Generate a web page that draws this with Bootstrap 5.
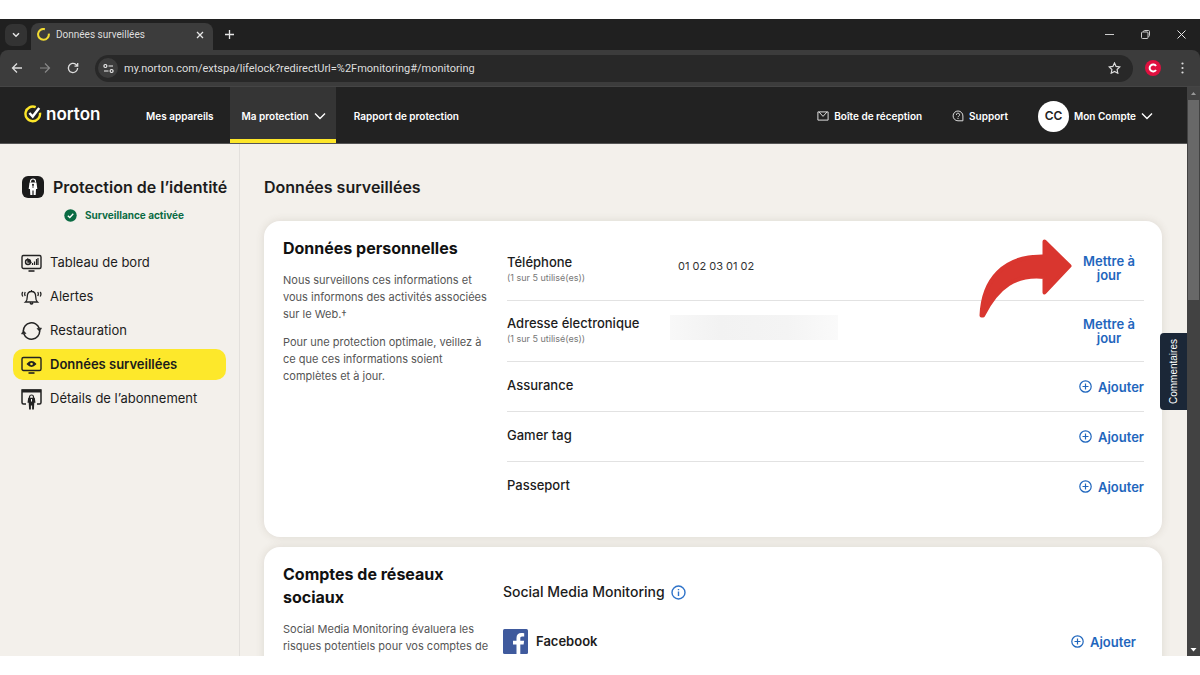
<!DOCTYPE html>
<html lang="fr">
<head>
<meta charset="utf-8">
<meta name="viewport" content="width=device-width, initial-scale=1">
<title>Données surveillées</title>
<link href="https://cdn.jsdelivr.net/npm/bootstrap@5.3.0/dist/css/bootstrap.min.css" rel="stylesheet">
<style>
  body { font-family: Inter, "Liberation Sans", sans-serif; font-size: 13px; color: #1c1c1c; background: #fff; height: 100vh; padding: 19px 0; overflow: hidden; }
  svg { display: block; flex: none; }
  button { font: inherit; color: inherit; background: none; border: 0; padding: 0; }
  a { color: inherit; text-decoration: none; }
  .browser { background: #202020; }
  .chrome-text { font-family: Roboto, "Noto Sans", sans-serif; font-size: 11px; color: #dedede; }
  .titlebar { height: 31px; padding: 0 14px 0 5px; }
  .tab-menu { width: 22px; height: 22px; border-radius: 7px; background: #333; }
  .tab-open { width: 182px; height: 27px; border-radius: 8px 8px 0 0; background: #3c3c3c; padding: 0 9px 4px 6px; gap: 6px; }
  .tab-title { font-size: 10px; }
  .window-buttons { gap: 27px; }
  .toolbar { height: 37px; background: #3c3c3c; border-radius: 8px 8px 0 0; border-bottom: 1px solid #454545; padding: 0 12px 0 11px; }
  .address { height: 27px; border-radius: 14px; background: #282828; padding: 0 12px 0 3px; gap: 6px; }
  .address input { background: none; border: 0; padding: 2px 0 0; outline: 0; }
  .site-info { width: 20px; height: 20px; border-radius: 50%; background: #3c3c3c; }
  .profile { width: 16px; height: 16px; border-radius: 50%; background: #e0103f; margin: 0 16px 0 12px; }
  .site-head { height: 57px; background: #222; border-bottom: 1px solid #555; color: #fff; font-size: 10px; font-weight: 600; padding-left: 24px; padding-right: 34px; }
  .brand { gap: 4px; padding-bottom: 3px; width: 110px; }
  .brand-name { font-size: 17px; line-height: 18px; }
  .head-link { height: 56px; padding: 2px 12px 0; }
  .head-link.active { background: #353535; border-bottom: 4px solid #fde629; padding: 6px 10px 0 12px; margin: 0 6px 0 4px; }
  .head-tools { gap: 30px; padding-top: 2px; }
  .head-tools a, .head-tools button, .head-link { gap: 5px; }
  .avatar { width: 31px; height: 31px; border-radius: 50%; background: #fff; color: #222; font-size: 12px; }
  .site { background: #f3f0eb; }
  .sidebar { width: 240px; border-right: 1px solid #e3e0dc; padding: 31px 13px 0; }
  .side-title { font-size: 16px; font-weight: 600; line-height: 24px; }
  .status { color: #0a6b43; font-size: 10px; font-weight: 700; line-height: 14px; margin: 9px 0 25px 51px; }
  .side-nav { gap: 3px; }
  .side-link { height: 31px; border-radius: 10px; padding: 0 8px; }
  .side-link.active { background: #fde82b; font-weight: 600; }
  .content { padding: 33px 25px 0 24px; }
  h1 { font-size: 16px; font-weight: 600; line-height: 20px; margin-bottom: 24px; }
  h2 { font-size: 16px; font-weight: 700; line-height: 23px; }
  .panel { background: #fff; border-radius: 16px; box-shadow: 0 0 8px rgba(90, 80, 60, .14); padding: 16px 18px 25px 19px; margin-bottom: 10px; }
  .panel-text { width: 208px; font-size: 11px; line-height: 17px; color: #555; }
  .panel-text h2 { color: #111; margin-bottom: 12px; }
  .panel-text p { margin-bottom: 11px; }
  .data-list { padding-top: 3px; }
  .data-row { border-bottom: 1px solid #e2e2e2; }
  .data-row:last-child { border-color: transparent; }
  .data-name { width: 163px; font-weight: 500; line-height: 16px; }
  .data-name small { display: block; font-size: 9px; font-weight: 400; color: #777; }
  .phone { font-size: 11px; color: #333; }
  .row-tall { height: 61px; }
  .row-short { height: 50px; }
  .redacted { width: 168px; height: 25px; background: linear-gradient(90deg, #f8f8f8, #f2f2f2 30%, #f4f4f4 70%, #fafafa); }
  .action { color: #1f66bd; font-weight: 600; line-height: 14px; gap: 6px; }
  .action-wrap { width: 70px; padding: 0 6px; }
  .pointer { right: 100%; top: -16px; margin-right: 2px; }
  .social-title { font-size: 14px; font-weight: 500; line-height: 20px; padding-top: 3px; margin-bottom: 27px; gap: 6px; }
  .feedback { right: 0; top: 246px; width: 27px; height: 77px; background: #1b2737; color: #fff; border-radius: 4px 0 0 4px; }
  .feedback span { writing-mode: vertical-rl; transform: rotate(180deg); font-family: "Liberation Sans", sans-serif; font-size: 10px; }
  .scroll-track { width: 13px; background: #424242; }
  .scroll-thumb { height: 200px; background: #686868; margin: 0 1px; }
</style>
</head>
<body>
<div class="browser h-100 d-flex flex-column">
  <div class="titlebar chrome-text d-flex align-items-end flex-shrink-0">
    <button class="tab-menu d-flex align-items-center justify-content-center align-self-center" aria-label="Rechercher des onglets"><svg width="8" height="6" viewBox="0 0 8 6" fill="none" stroke="#e6e6e6" stroke-width="1.5"><path d="M1 1.2l3 3 3-3"/></svg></button>
    <div class="tab-open d-flex align-items-center ms-1">
      <svg width="13" height="13" viewBox="0 0 14 14" fill="none" stroke="#f2dc33" stroke-width="2.200"><path d="M8.500 1.300A5.800 5.800 0 1 0 12.700 6"/></svg>
      <span class="tab-title me-auto">Données surveillées</span>
      <button aria-label="Fermer l’onglet"><svg width="8" height="8" viewBox="0 0 8 8" stroke="#e6e6e6" stroke-width="1.3"><path d="M1 1l6 6M7 1L1 7"/></svg></button>
    </div>
    <button class="ms-2 ps-1 align-self-center" aria-label="Nouvel onglet"><svg width="9" height="9" viewBox="0 0 9 9" stroke="#e6e6e6" stroke-width="1.3"><path d="M4.500 0v9M0 4.500h9"/></svg></button>
    <div class="window-buttons ms-auto align-self-center d-flex align-items-center">
      <button aria-label="Réduire"><svg width="9" height="9" viewBox="0 0 9 9" stroke="#ccc"><path d="M0 4.500h9"/></svg></button>
      <button aria-label="Agrandir"><svg width="9" height="9" viewBox="0 0 9 9" fill="none" stroke="#ccc"><rect x=".5" y="2" width="6.500" height="6.500" rx="1"/><path d="M2.500 1.800V1.500a1 1 0 0 1 1-1h4a1 1 0 0 1 1 1v4a1 1 0 0 1-1 1"/></svg></button>
      <button aria-label="Fermer"><svg width="9" height="9" viewBox="0 0 9 9" stroke="#e6e6e6"><path d="M.5.5l8 8M8.500.5l-8 8"/></svg></button>
    </div>
  </div>

  <div class="toolbar chrome-text d-flex align-items-center flex-shrink-0">
    <button aria-label="Précédent"><svg width="12" height="12" viewBox="0 0 12 12" fill="none" stroke="#ddd" stroke-width="1.3"><path d="M11 6H2M6 1.500L1.500 6 6 10.500"/></svg></button>
    <button class="ms-3" aria-label="Suivant"><svg width="12" height="12" viewBox="0 0 12 12" fill="none" stroke="#888" stroke-width="1.2"><path d="M1 6h9M6 1.500L10.500 6 6 10.500"/></svg></button>
    <button class="ms-3" aria-label="Actualiser"><svg width="12" height="12" viewBox="0 0 12 12" fill="none" stroke="#ddd" stroke-width="1.300"><path d="M10.600 6A4.600 4.600 0 1 1 9 2.500L10.500 4M10.700 1v3.200H7.500"/></svg></button>
    <div class="address flex-grow-1 d-flex align-items-center ms-3">
      <span class="site-info d-flex align-items-center justify-content-center"><svg width="11" height="11" viewBox="0 0 11 11" fill="none" stroke="#eee" stroke-width="1.200"><circle cx="2.400" cy="3" r="1.500"/><path d="M5.500 3H10M1 8h4.500"/><circle cx="8.600" cy="8" r="1.500"/></svg></span>
      <input class="chrome-text flex-grow-1" type="text" aria-label="Adresse" value="my.norton.com/extspa/lifelock?redirectUrl=%2Fmonitoring#/monitoring">
      <button aria-label="Ajouter aux favoris"><svg width="13" height="12" viewBox="0 0 13 12" fill="none" stroke="#ddd" stroke-width="1.200"><path d="M6.500 1l1.600 3.400 3.700.5-2.700 2.600.7 3.700-3.300-1.800-3.300 1.800.7-3.700L1.200 4.900l3.700-.5z"/></svg></button>
    </div>
    <button class="profile d-flex align-items-center justify-content-center" aria-label="Profil"><svg width="10" height="10" viewBox="0 0 10 10" fill="none" stroke="#fff" stroke-width="2"><path d="M8 3A3.500 3.500 0 1 0 8 7"/></svg></button>
    <button class="px-1" aria-label="Menu"><svg width="3" height="12" viewBox="0 0 3 12" fill="#ddd"><circle cx="1.500" cy="1.500" r="1.100"/><circle cx="1.500" cy="6" r="1.100"/><circle cx="1.500" cy="10.500" r="1.100"/></svg></button>
  </div>

  <div class="d-flex flex-grow-1 overflow-hidden">
    <div class="site flex-grow-1 d-flex flex-column position-relative overflow-hidden">
      <header class="site-head d-flex align-items-center flex-shrink-0">
        <a href="#" class="brand d-flex align-items-center"><svg width="18" height="18" viewBox="0 0 18 18" fill="none"><path d="M11.700 2.200A7.300 7.300 0 1 0 16 7.800" stroke="#fde629" stroke-width="2.400"/><path d="M5.400 8l3.300 3.600L15.200 3" stroke="#fff" stroke-width="2.500"/></svg><span class="brand-name">norton</span></a>
        <nav class="d-flex">
          <a href="#" class="head-link d-flex align-items-center">Mes appareils</a>
          <a href="#" class="head-link active d-flex align-items-center">Ma protection<svg width="12" height="8" viewBox="0 0 12 8" fill="none" stroke="#fff" stroke-width="1.400"><path d="M1 1.500l5 5 5-5"/></svg></a>
          <a href="#" class="head-link d-flex align-items-center">Rapport de protection</a>
        </nav>
        <div class="head-tools d-flex align-items-center ms-auto">
          <a href="#" class="d-flex align-items-center"><svg width="12" height="10" viewBox="0 0 12 10" fill="none" stroke="#ddd"><path d="M.9.9h10.200v8.200H.9z"/><path d="M2 1l4 4.400L10 1"/></svg>Boîte de réception</a>
          <a href="#" class="d-flex align-items-center"><svg width="12" height="12" viewBox="0 0 12 12" fill="none" stroke="#ddd"><path d="M6 10.800A4.900 4.900 0 1 1 10.900 6v4.800z"/><path d="M4.400 4.900a1.600 1.600 0 1 1 2.300 1.300Q6 6.500 6 7.200M6 8v1"/></svg>Support</a>
          <button class="d-flex align-items-center"><span class="avatar d-flex align-items-center justify-content-center">CC</span>Mon Compte<svg width="12" height="8" viewBox="0 0 12 8" fill="none" stroke="#fff" stroke-width="1.400"><path d="M1 1.500l5 5 5-5"/></svg></button>
        </div>
      </header>

      <div class="d-flex flex-grow-1 overflow-hidden">
        <aside class="sidebar flex-shrink-0">
          <div class="side-title d-flex align-items-center ps-2 text-nowrap"><svg class="me-2" width="24" height="24" viewBox="0 0 24 24"><rect x="1" y="1" width="22" height="22" rx="6" fill="#1b1b1b"/><path d="M9.500 7.500V6.500a2.500 2.500 0 0 1 5 0v1" fill="none" stroke="#fff" stroke-width="1.200"/><path d="M8.500 7.500h7l.8 6.500H15l-.3 6h-2.100v-4.500h-1.200V20H9.300L9 14H7.700z" fill="#fff"/><circle cx="12" cy="9.800" r="1" fill="#1b1b1b"/><path d="M11.600 10h.8v3h-.8z" fill="#1b1b1b"/></svg>Protection de l’identité</div>
          <div class="status d-flex align-items-center"><svg class="me-2" width="13" height="13" viewBox="0 0 13 13" fill="none"><circle cx="6.500" cy="6.500" r="6.200" fill="#0a6b43"/><path d="M3.800 6.700l2 1.800 3.500-3.700" stroke="#fff" stroke-width="1.300"/></svg>Surveillance activée</div>
          <nav class="side-nav d-grid">
            <a href="#" class="side-link d-flex align-items-center"><svg class="me-2" width="21" height="20" viewBox="0 0 21 20" fill="none" stroke="#222" stroke-width="1.400"><rect x="1" y="2.500" width="19" height="13" rx="1.500"/><path d="M7.500 18h6" stroke-width="1.600"/><circle cx="7" cy="9" r="2.500"/><path d="M7 9V6.500L9.500 9z" fill="#222"/><path d="M11.500 12v-2M13.500 12V8.500M15.500 12V6M17 12V5" stroke-width="1.200"/></svg>Tableau de bord</a>
            <a href="#" class="side-link d-flex align-items-center"><svg class="me-2" width="21" height="18" viewBox="0 0 21 18" fill="none" stroke="#222" stroke-width="1.300"><path d="M4.500 14c1.600-1.300 1.800-2.500 1.800-5.500 0-3 1.600-5 4.200-5s4.200 2 4.200 5c0 3 .2 4.200 1.800 5.500zM10.500 3.500V2M9 15q1.500 2 3 0"/><path d="M4.300 4Q3 6 4.300 8M1.800 4Q.3 6 1.800 8.500M16.700 4Q18 6 16.700 8M19.200 4q1.500 2 0 4.500"/></svg>Alertes</a>
            <a href="#" class="side-link d-flex align-items-center"><svg class="me-2" width="21" height="20" viewBox="0 0 21 20" fill="none" stroke="#222" stroke-width="1.500"><path d="M2.300 10A8.200 8.200 0 0 1 18.200 7.200M18.700 10A8.200 8.200 0 0 1 2.800 12.800"/><path d="M16 7.500l4.500-.5-1.800 3.500zM5 12.500L.5 13l1.800-3.500z" fill="#222" stroke-width=".6"/></svg>Restauration</a>
            <a href="#" class="side-link active d-flex align-items-center" aria-current="page"><svg class="me-2" width="21" height="20" viewBox="0 0 21 20" fill="none" stroke="#222" stroke-width="1.400"><rect x="1" y="2.500" width="19" height="13" rx="1.500"/><path d="M7.500 18h6" stroke-width="1.600"/><path d="M6.500 9q4-4.500 8 0-4 4.500-8 0z" fill="#222"/><circle cx="10.500" cy="9" r="1.300" fill="#fde82b" stroke="none"/></svg>Données surveillées</a>
            <a href="#" class="side-link d-flex align-items-center"><svg class="me-2" width="21" height="22" viewBox="0 0 21 22" fill="none" stroke="#222" stroke-width="1.500"><path d="M5 16H2.500Q1 16 1 14.500V2h19v12.500q0 1.500-1.500 1.500H16"/><path d="M1 3h19" stroke-width="3"/><path d="M8.500 10V9a2 2 0 0 1 4 0v1" stroke-width="1.200"/><path d="M7.200 9.800h6.600l.7 5h-1.200l-.4 6.700h-1.800v-4h-1.200v4H8.100l-.4-6.700H6.500z" fill="#222" stroke="none"/><path d="M10.500 11v2.500" stroke="#fff" stroke-width="1"/></svg>Détails de l’abonnement</a>
          </nav>
        </aside>

        <main class="content flex-grow-1">
          <h1>Données surveillées</h1>
          <section class="panel d-flex">
            <div class="panel-text flex-shrink-0">
              <h2>Données personnelles</h2>
              <p>Nous surveillons ces informations et vous informons des activités associées sur le Web.†</p>
              <p>Pour une protection optimale, veillez à ce que ces informations soient complètes et à jour.</p>
            </div>
            <div class="data-list flex-grow-1 ms-3">
              <div class="data-row row-tall d-flex align-items-center">
                <div class="data-name">Téléphone<small>(1 sur 5 utilisé(es))</small></div>
                <div class="phone ms-2 mb-2">01 02 03 01 02</div>
                <div class="position-relative ms-auto">
                  <button class="action action-wrap">Mettre à jour</button>
                  <svg class="pointer position-absolute" width="93" height="82" viewBox="0 0 93 82" fill="#d9362f" stroke="#d9362f" stroke-width="4" stroke-linejoin="round"><path d="M2.500 77.500C4 42 24 17.500 65.500 18.500V3.500L90.500 28 65.500 54.500V39C37 36 19 48 4 77.500z"/></svg>
                </div>
              </div>
              <div class="data-row row-tall d-flex align-items-center">
                <div class="data-name">Adresse électronique<small>(1 sur 5 utilisé(es))</small></div>
                <div class="redacted mb-2"></div>
                <button class="action action-wrap ms-auto">Mettre à jour</button>
              </div>
              <div class="data-row row-short d-flex align-items-center">
                <div class="data-name mb-1">Assurance</div>
                <button class="action ms-auto d-flex align-items-center"><svg width="13" height="13" viewBox="0 0 13 13" fill="none" stroke="#1f66bd" stroke-width="1.200"><circle cx="6.500" cy="6.500" r="5.700"/><path d="M6.500 3.500v6M3.500 6.500h6"/></svg>Ajouter</button>
              </div>
              <div class="data-row row-short d-flex align-items-center">
                <div class="data-name mb-1">Gamer tag</div>
                <button class="action ms-auto d-flex align-items-center"><svg width="13" height="13" viewBox="0 0 13 13" fill="none" stroke="#1f66bd" stroke-width="1.200"><circle cx="6.500" cy="6.500" r="5.700"/><path d="M6.500 3.500v6M3.500 6.500h6"/></svg>Ajouter</button>
              </div>
              <div class="data-row row-short d-flex align-items-center">
                <div class="data-name mb-1">Passeport</div>
                <button class="action ms-auto d-flex align-items-center"><svg width="13" height="13" viewBox="0 0 13 13" fill="none" stroke="#1f66bd" stroke-width="1.200"><circle cx="6.500" cy="6.500" r="5.700"/><path d="M6.500 3.500v6M3.500 6.500h6"/></svg>Ajouter</button>
              </div>
            </div>
          </section>

          <section class="panel d-flex">
            <div class="panel-text flex-shrink-0">
              <h2>Comptes de réseaux sociaux</h2>
              <p>Social Media Monitoring évaluera les risques potentiels pour vos comptes de</p>
            </div>
            <div class="flex-grow-1 ms-2 ps-1 pt-3 pe-2">
              <div class="social-title d-flex align-items-center">Social Media Monitoring<svg width="15" height="15" viewBox="0 0 15 15" fill="none" stroke="#2f73c9" stroke-width="1.400"><circle cx="7.500" cy="7.500" r="6.500"/><path d="M7.500 6.500V11M7.500 4v1.300"/></svg></div>
              <div class="d-flex align-items-center">
                <svg width="25" height="25" viewBox="0 0 25 25"><rect width="25" height="25" rx="1.500" fill="#3f5a9d"/><path d="M13.500 25v-9.500H10v-3.700h3.500V9c0-3.200 1.900-5 4.800-5 1.400 0 2.500.1 2.900.2v3.300h-2c-1.600 0-1.900.8-1.900 1.900v2.400h3.800l-.5 3.700h-3.300V25z" fill="#fff"/></svg>
                <span class="fw-semibold ms-2">Facebook</span>
                <button class="action ms-auto d-flex align-items-center"><svg width="13" height="13" viewBox="0 0 13 13" fill="none" stroke="#1f66bd" stroke-width="1.200"><circle cx="6.500" cy="6.500" r="5.700"/><path d="M6.500 3.500v6M3.500 6.500h6"/></svg>Ajouter</button>
              </div>
            </div>
          </section>
        </main>
      </div>
      <button class="feedback position-absolute d-flex align-items-center justify-content-center"><span>Commentaires</span></button>
    </div>
    <div class="scroll-track flex-shrink-0 d-flex flex-column">
      <svg width="13" height="13" viewBox="0 0 13 13" fill="#999"><path d="M6.500 5L9 8H4z"/></svg>
      <div class="scroll-thumb"></div>
      <svg class="mt-auto" width="13" height="13" viewBox="0 0 13 13" fill="#fff"><path d="M6.500 8.500L9.500 5h-6z"/></svg>
    </div>
  </div>
</div>
<script src="https://cdn.jsdelivr.net/npm/bootstrap@5.3.0/dist/js/bootstrap.bundle.min.js"></script>
</body>
</html>
